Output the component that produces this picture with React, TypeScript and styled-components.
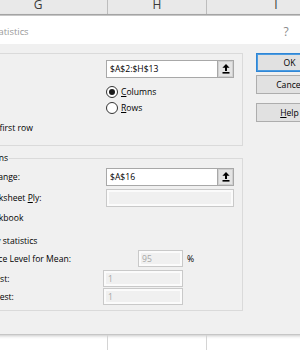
import React from "react";
import styled, { createGlobalStyle } from "styled-components";

const Global = createGlobalStyle`
  html, body { margin: 0; padding: 0; background: #ffffff; }
  body { font-family: "Open Sans", "Noto Sans", sans-serif; }
`;

const Page = styled.div`
  width: 300px;
  height: 350px;
  overflow: hidden;
  background: #ffffff;
  display: flex;
  flex-direction: column;
`;

const SheetHeader = styled.div`
  display: flex;
  flex-shrink: 0;
  height: 14px;
  margin-left: -31px;
  background: #e9e9e9;
  border-bottom: 1px solid #ababab;
`;

const ColHead = styled.div<{ $w: number }>`
  width: ${(p) => p.$w}px;
  flex-shrink: 0;
  box-sizing: border-box;
  border-right: 1px solid #bdbdbd;
  text-align: center;
  font-size: 12px;
  line-height: 10px;
  color: #3a3a3a;
  overflow: hidden;
`;

const SheetRow = styled.div`
  display: flex;
  flex: 1;
  margin-left: -31px;
`;

const Cell = styled.div<{ $w: number }>`
  width: ${(p) => p.$w}px;
  flex-shrink: 0;
  box-sizing: border-box;
  border-right: 1px solid #d4d4d4;
`;

const Dialog = styled.div`
  flex-shrink: 0;
  width: 402px;
  margin-left: -64px;
  box-sizing: border-box;
  border: 1px solid #c6c6c6;
  box-shadow: 0 1px 3px rgba(0, 0, 0, 0.22);
  display: flex;
  flex-direction: column;
`;

const TitleBar = styled.div`
  height: 28px;
  background: #ffffff;
  display: flex;
  align-items: center;
`;

const Title = styled.div`
  flex: 1;
  padding-left: 2px;
  padding-top: 2px;
  font-size: 9.4px;
  color: #9a9a9a;
  white-space: nowrap;
`;

const TitleButton = styled.div`
  width: 34px;
  text-align: center;
  font-size: 12px;
  padding-top: 2px;
  color: #8a8a8a;
`;

const Body = styled.div`
  background: #f0f0f0;
  display: flex;
  gap: 13px;
  padding: 3px 14px 23px 6px;
`;

const LeftCol = styled.div`
  display: flex;
  flex-direction: column;
  width: 300px;
  flex-shrink: 0;
`;

const Group = styled.fieldset<{ $mt?: number }>`
  margin: ${(p) => p.$mt ?? 0}px 0 0 0;
  padding: 0 4px;
  min-width: 0;
  border: 1px solid #dadada;
  box-sizing: border-box;
  width: 300px;
`;

const Legend = styled.legend`
  margin-left: -2px;
  padding: 0 1px;
  font-size: 8.6px;
  line-height: 12px;
  color: #000;
  white-space: nowrap;
`;

const Rows = styled.div<{ $pb: number }>`
  display: flex;
  flex-direction: column;
  padding-bottom: ${(p) => p.$pb}px;
`;

const Row = styled.div<{ $h: number; $mt?: number; $top?: boolean }>`
  display: flex;
  align-items: ${(p) => (p.$top ? "flex-start" : "center")};
  height: ${(p) => p.$h}px;
  margin-top: ${(p) => p.$mt ?? 0}px;
`;

const ControlSlot = styled.div`
  width: 12px;
  height: 12px;
  margin-right: 2px;
  flex-shrink: 0;
  display: flex;
`;

const Label = styled.div<{ $w?: number; $lh?: number }>`
  ${(p) => (p.$w ? `width: ${p.$w}px; flex-shrink: 0;` : "")}
  ${(p) => (p.$lh ? `line-height: ${p.$lh}px;` : "")}
  font-size: 8.6px;
  color: #000;
  white-space: nowrap;
`;

const Key = styled.span`
  text-decoration: underline;
  text-underline-offset: 1px;
`;

const RadioCircle = styled.div<{ $on?: boolean }>`
  width: 12px;
  height: 12px;
  box-sizing: border-box;
  border-radius: 50%;
  border: 1px solid #333333;
  background: #ffffff;
  flex-shrink: 0;
  display: flex;
  align-items: center;
  justify-content: center;
  &::after {
    content: "";
    width: 6px;
    height: 6px;
    border-radius: 50%;
    background: ${(p) => (p.$on ? "#1a1a1a" : "transparent")};
  }
`;

const CheckBox = styled.div`
  width: 12px;
  height: 12px;
  box-sizing: border-box;
  border: 1px solid #333333;
  background: #ffffff;
`;

const RadioStack = styled.div`
  display: flex;
  flex-direction: column;
`;

const RadioOption = styled.div`
  display: flex;
  align-items: center;
  height: 16px;
  gap: 3px;
`;

const Field = styled.div<{ $w: number }>`
  width: ${(p) => p.$w}px;
  height: 100%;
  box-sizing: border-box;
  display: flex;
  border: 1px solid #a8a8a8;
  background: #ffffff;
  flex-shrink: 0;
`;

const FieldText = styled.div`
  flex: 1;
  padding-left: 3px;
  display: flex;
  align-items: center;
  font-size: 8.6px;
  color: #000;
  white-space: nowrap;
`;

const RefButton = styled.div`
  width: 16px;
  box-sizing: border-box;
  border-left: 1px solid #a8a8a8;
  background: #e4e4e4;
  box-shadow: inset 0 0 0 1px #d0d0d0;
  display: flex;
  align-items: center;
  justify-content: center;
`;

const DisabledField = styled.div<{ $w: number; $pl?: number }>`
  width: ${(p) => p.$w}px;
  height: 100%;
  box-sizing: border-box;
  border: 1px solid #c9c9c9;
  background: #f0f0f0;
  box-shadow: inset 0 0 0 2px #fbfbfb;
  display: flex;
  align-items: center;
  padding-left: ${(p) => p.$pl ?? 3}px;
  font-size: 8.6px;
  color: #a6a6a6;
  flex-shrink: 0;
`;

const Unit = styled.div`
  margin-left: 4px;
  font-size: 8.6px;
  color: #000;
`;

const ButtonCol = styled.div`
  display: flex;
  flex-direction: column;
  padding-top: 6px;
`;

const DialogButton = styled.div<{ $primary?: boolean; $mt?: number }>`
  width: 67px;
  height: 19px;
  margin-top: ${(p) => p.$mt ?? 0}px;
  box-sizing: border-box;
  border: 1px solid ${(p) => (p.$primary ? "#2f86d6" : "#adadad")};
  box-shadow: ${(p) => (p.$primary ? "inset 0 0 0 1px #4b9be0" : "none")};
  background: #e1e1e1;
  display: flex;
  align-items: center;
  justify-content: center;
  font-size: 8.6px;
  color: #000;
`;

const RefIcon = () => (
  <svg width="8" height="10" viewBox="0 0 8 10">
    <path d="M4 0 L7.6 3.8 H5 V7 H3 V3.8 H0.4 Z" fill="#000" />
    <rect x="0.5" y="8" width="7" height="1.6" fill="#000" />
  </svg>
);

export default function App() {
  return (
    <>
      <Global />
      <Page>
        <SheetHeader>
          <ColHead $w={139}>G</ColHead>
          <ColHead $w={99}>H</ColHead>
          <ColHead $w={139}>I</ColHead>
        </SheetHeader>
        <Dialog>
          <TitleBar>
            <Title>Descriptive Statistics</Title>
            <TitleButton>?</TitleButton>
            <TitleButton>✕</TitleButton>
          </TitleBar>
          <Body>
            <LeftCol>
              <Group>
                <Legend>Input</Legend>
                <Rows $pb={9}>
                  <Row $h={18} $mt={1}>
                    <Label $w={158}>
                      <Key>I</Key>nput Range:
                    </Label>
                    <Field $w={128}>
                      <FieldText>$A$2:$H$13</FieldText>
                      <RefButton>
                        <RefIcon />
                      </RefButton>
                    </Field>
                  </Row>
                  <Row $h={32} $mt={6} $top>
                    <Label $w={158} $lh={16}>
                      Grouped By:
                    </Label>
                    <RadioStack>
                      <RadioOption>
                        <RadioCircle $on />
                        <Label>
                          <Key>C</Key>olumns
                        </Label>
                      </RadioOption>
                      <RadioOption>
                        <RadioCircle />
                        <Label>
                          <Key>R</Key>ows
                        </Label>
                      </RadioOption>
                    </RadioStack>
                  </Row>
                  <Row $h={17} $mt={3}>
                    <ControlSlot>
                      <CheckBox />
                    </ControlSlot>
                    <Label>
                      <Key>L</Key>abels in first row
                    </Label>
                  </Row>
                </Rows>
              </Group>
              <Group $mt={6}>
                <Legend>Output options</Legend>
                <Rows $pb={5}>
                  <Row $h={18} $mt={4}>
                    <ControlSlot>
                      <RadioCircle />
                    </ControlSlot>
                    <Label $w={144}>
                      <Key>O</Key>utput Range:
                    </Label>
                    <Field $w={128}>
                      <FieldText>$A$16</FieldText>
                      <RefButton>
                        <RefIcon />
                      </RefButton>
                    </Field>
                  </Row>
                  <Row $h={18} $mt={3}>
                    <ControlSlot>
                      <RadioCircle $on />
                    </ControlSlot>
                    <Label $w={144}>
                      New Worksheet <Key>P</Key>ly:
                    </Label>
                    <DisabledField $w={128} />
                  </Row>
                  <Row $h={18} $mt={2}>
                    <ControlSlot>
                      <RadioCircle />
                    </ControlSlot>
                    <Label>
                      New <Key>W</Key>orkbook
                    </Label>
                  </Row>
                  <Row $h={18} $mt={5}>
                    <ControlSlot>
                      <CheckBox />
                    </ControlSlot>
                    <Label>
                      <Key>S</Key>ummary statistics
                    </Label>
                  </Row>
                  <Row $h={17}>
                    <ControlSlot>
                      <CheckBox />
                    </ControlSlot>
                    <Label $w={176}>
                      Co<Key>n</Key>fidence Level for Mean:
                    </Label>
                    <DisabledField $w={45} $pl={3}>
                      95
                    </DisabledField>
                    <Unit>%</Unit>
                  </Row>
                  <Row $h={17} $mt={3}>
                    <ControlSlot>
                      <CheckBox />
                    </ControlSlot>
                    <Label $w={141}>
                      Kth L<Key>a</Key>rgest:
                    </Label>
                    <DisabledField $w={80} $pl={4}>
                      1
                    </DisabledField>
                  </Row>
                  <Row $h={17} $mt={1}>
                    <ControlSlot>
                      <CheckBox />
                    </ControlSlot>
                    <Label $w={141}>
                      Kth S<Key>m</Key>allest:
                    </Label>
                    <DisabledField $w={80} $pl={4}>
                      1
                    </DisabledField>
                  </Row>
                </Rows>
              </Group>
            </LeftCol>
            <ButtonCol>
              <DialogButton $primary>OK</DialogButton>
              <DialogButton $mt={3}>Cancel</DialogButton>
              <DialogButton $mt={9}>
                <Key>H</Key>elp
              </DialogButton>
            </ButtonCol>
          </Body>
        </Dialog>
        <SheetRow>
          <Cell $w={139} />
          <Cell $w={99} />
          <Cell $w={139} />
        </SheetRow>
      </Page>
    </>
  );
}
